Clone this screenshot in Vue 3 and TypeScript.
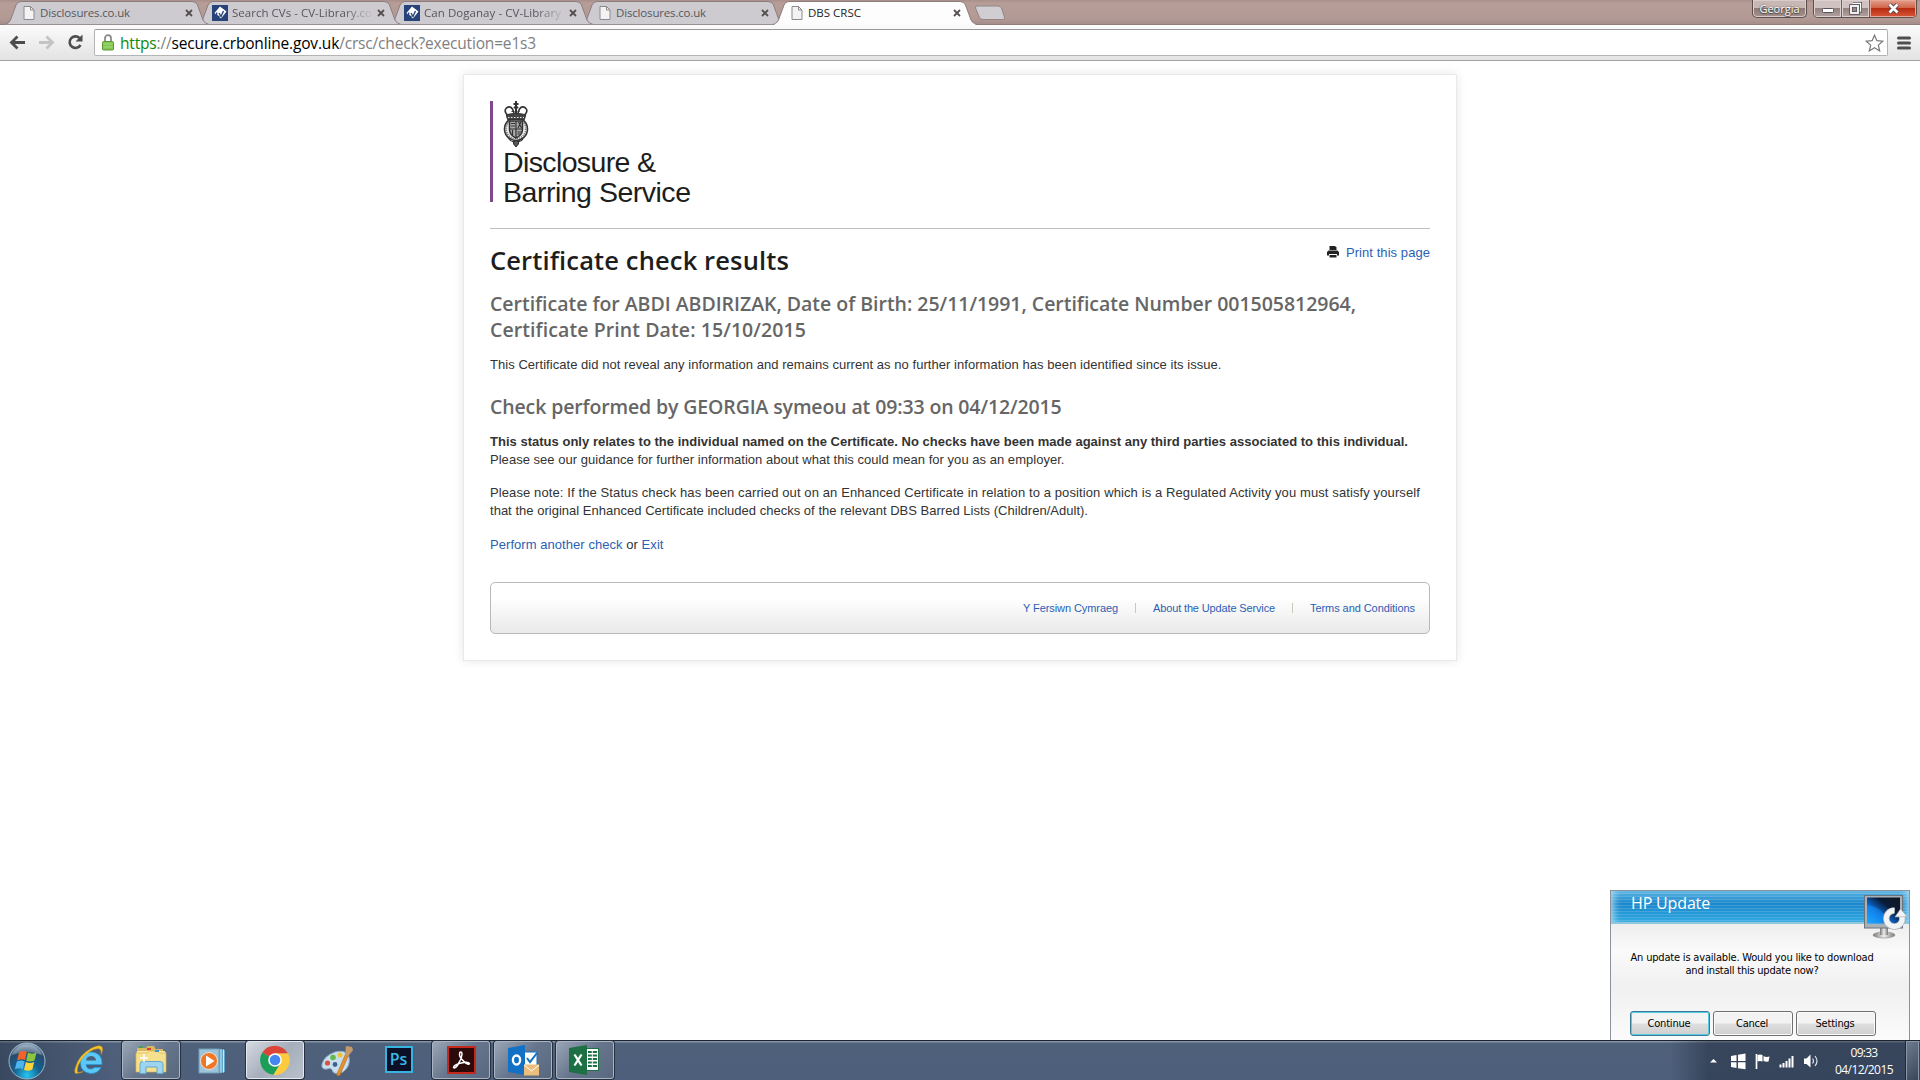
<script setup lang="ts">
interface Tab {
  title: string
  icon: 'page' | 'cv'
  width: number
  active?: boolean
}

const tabs: Tab[] = [
  { title: 'Disclosures.co.uk', icon: 'page', width: 90 },
  { title: 'Search CVs - CV-Library.co', icon: 'cv', width: 140 },
  { title: 'Can Doganay - CV-Library', icon: 'cv', width: 137 },
  { title: 'Disclosures.co.uk', icon: 'page', width: 90 },
  { title: 'DBS CRSC', icon: 'page', width: 53, active: true },
]

// Tracks a line of text so that it spans the given number of pixels.
const vTrack = {
  mounted(el: HTMLElement, binding: { value: number }) {
    const count = (el.textContent ?? '').length
    const natural = el.getBoundingClientRect().width
    el.style.letterSpacing = `${(binding.value - natural) / count}px`
  },
}
</script>

<template>
  <div class="screen">
    <header class="chrome">
      <div class="strip">
        <div class="tabs">
          <div
            v-for="(tab, i) in tabs"
            :key="i"
            class="tab"
            :class="{ active: tab.active }"
            :style="{ zIndex: tab.active ? 9 : 5 - i }"
          >
            <svg class="shape" width="204" height="25" viewBox="0 0 204 25">
              <path
                d="M0 24.5 Q4 23.5 5.5 20 L11 5 Q12.5 1.5 16 1.5 L187 1.5 Q191 1.5 192.5 5 L198 20 Q199.500 23.500 204 24.500"
                :fill="tab.active ? '#fdfdfd' : '#cdcbd0'"
                stroke="#8b7e7e"
              />
              <path v-if="!tab.active" d="M0 24.500H204" stroke="#98908f" />
              <path v-else d="M2 24.500H202" stroke="#fbfbfb" stroke-width="1.500" />
            </svg>
            <svg v-if="tab.icon === 'page'" class="fav" width="12" height="14" viewBox="0 0 12 14">
              <path d="M1 .5H7.500L11 4V13.500H1Z" fill="#f4f3f3" stroke="#8b8b8b" />
              <path d="M7.500 .5V4H11" fill="none" stroke="#8b8b8b" />
            </svg>
            <svg v-else class="fav cv" width="16" height="16" viewBox="0 0 16 16">
              <rect width="16" height="16" fill="#27447a" />
              <path d="M8 1.500L14.500 6.500L9 13.500L2.500 8Z" fill="#fff" />
              <path d="M5 7.500C3.500 10 5.500 12.500 7.500 11M7 8L9 11.500L11.500 6" fill="none" stroke="#27447a" stroke-width="1.400" />
            </svg>
            <span class="tab-title" :class="{ fade: tab.icon === 'cv' }">
              <span v-track="tab.width" class="fit">{{ tab.title }}</span>
            </span>
            <svg class="close" width="8" height="8" viewBox="0 0 8 8">
              <path d="M1 1L7 7M7 1L1 7" stroke="#55504f" stroke-width="1.800" />
            </svg>
          </div>
          <svg class="new-tab" width="32" height="16" viewBox="0 0 32 16">
            <path d="M3 1H24Q26.500 1 27.500 3L30.500 12Q31 14.500 29 14.500H9Q6.500 14.500 5.500 12.500L1.500 3Q1 1 3 1Z" fill="#d0ced2" stroke="#958685" />
          </svg>
        </div>
        <div class="caption">
          <div class="user">Georgia</div>
          <div class="controls">
            <div class="ctl min">
              <svg width="12" height="6" viewBox="0 0 12 6"><rect x=".5" y=".5" width="11" height="4" rx="1" fill="#fff" stroke="#55535c" /></svg>
            </div>
            <div class="ctl max">
              <svg width="13" height="13" viewBox="0 0 13 13">
                <path d="M4 1.500H11.500V9H9" fill="none" stroke="#55535c" stroke-width="3" />
                <path d="M4 1.500H11.500V9H9" fill="none" stroke="#fff" stroke-width="1.300" />
                <rect x="2" y="4" width="7" height="7" fill="none" stroke="#55535c" stroke-width="3.600" />
                <rect x="2" y="4" width="7" height="7" fill="none" stroke="#fff" stroke-width="1.800" />
              </svg>
            </div>
            <div class="ctl shut">
              <svg width="13" height="11" viewBox="0 0 13 11">
                <path d="M2.500 1.500L10.500 9.500M10.500 1.500L2.500 9.500" stroke="#5a4448" stroke-width="4.400" />
                <path d="M2.500 1.500L10.500 9.500M10.500 1.500L2.500 9.500" stroke="#fff" stroke-width="2.600" />
              </svg>
            </div>
          </div>
        </div>
      </div>
      <div class="toolbar">
        <svg class="nav" width="94" height="35" viewBox="0 0 94 35">
          <path d="M25 17.500H12M17.500 11.500L11.500 17.500L17.500 23.500" fill="none" stroke="#4d4d4d" stroke-width="2.800" />
          <path d="M39 17.500H52M46.500 11.500L52.500 17.500L46.500 23.500" fill="none" stroke="#c4c4c4" stroke-width="2.800" />
          <path d="M80.500 20A5.800 5.800 0 1 1 79.500 13" fill="none" stroke="#4d4d4d" stroke-width="2.600" />
          <path d="M82.500 9.500V16.500H75.500Z" fill="#4d4d4d" />
        </svg>
        <div class="omnibox">
          <svg width="12" height="17" viewBox="0 0 12 17">
            <path d="M3 8V4.500A3 3.300 0 0 1 9 4.500V8" fill="none" stroke="#8a8a8a" stroke-width="1.800" />
            <rect x=".5" y="7.500" width="11" height="8.500" rx="1" fill="#82c653" stroke="#5a9a36" />
            <path d="M1.500 10H10.500M1.500 13H10.500" stroke="#a3dc78" />
          </svg>
          <span v-track="416" class="url"><span class="scheme">https</span>://<span class="host">secure.crbonline.gov.uk</span>/crsc/check?execution=e1s3</span>
          <svg class="star" width="19" height="18" viewBox="0 0 19 18">
            <path d="M9.500 1.200L11.900 6.700L17.800 7.200L13.300 11.100L14.700 16.900L9.500 13.800L4.300 16.900L5.700 11.100L1.200 7.200L7.100 6.700Z" fill="#fff" stroke="#777" stroke-width="1.200" />
          </svg>
        </div>
        <svg class="menu" width="14" height="14" viewBox="0 0 14 14">
          <path d="M1.500 2H12.500M1.500 7H12.500M1.500 12H12.500" stroke="#4f4f4f" stroke-width="3" stroke-linecap="round" />
        </svg>
      </div>
    </header>

    <main class="page">
      <article class="card">
        <div class="logo">
          <div class="bar"></div>
          <div class="brand">
            <svg width="26" height="46" viewBox="0 0 26 46" fill="none" stroke="#333">
              <circle cx="13" cy="28" r="11.500" stroke-width="1.600" fill="#eee" />
              <circle cx="13" cy="28" r="9.800" stroke="#777" stroke-width="1.600" stroke-dasharray="1.200 1" />
              <path d="M6.500 20H19.500V29Q19 34.500 13 37Q7 34.500 6.500 29Z" fill="#aaa" stroke-width="1.500" />
              <path d="M13 20V36M6.500 28H19.500M8 22.500H12M8 25H12M14.500 31H18.500M14.500 33H17M9.500 29V34M15.500 21L18.500 27M18 21L15 27" stroke-width="1.200" />
              <path d="M4.500 17L3.500 13Q.8 9.500 3.500 7Q7 4.500 9.500 8L11 12M21.500 17L22.500 13Q25.200 9.500 22.500 7Q19 4.500 16.500 8L15 12" stroke-width="1.600" />
              <path d="M4 13.500Q13 11 22 13.500L21.500 18.500H4.500Z" fill="#444" />
              <path d="M5 16.500H21" stroke="#eee" stroke-dasharray="1.500 1.500" />
              <path d="M13 0V13M10.500 3H15.500M11 7Q13 5 15 7" stroke-width="2" />
              <path d="M8.500 10.500H17.500" stroke-dasharray="2 1" />
              <path d="M10.500 39.500H15.500V43L13 46L10.500 43Z" fill="#555" />
              <path d="M6 38Q9 42 12 40M20 38Q17 42 14 40" stroke-width="1.200" />
            </svg>
            <div class="line"><span v-track="152.500" class="fit">Disclosure &amp;</span></div>
            <div class="line"><span v-track="187.500" class="fit">Barring Service</span></div>
          </div>
        </div>

        <div class="head">
          <h1><span v-track="299" class="fit">Certificate check results</span></h1>
          <a class="print">
            <svg width="12" height="12" viewBox="0 0 12 12">
              <path d="M3 0H8L9.500 1.500V4H2.500V0Z" fill="#222" />
              <path d="M1.500 4.500H10.500L12 6V9.500H10V8H2V9.500H0V6Z" fill="#222" />
              <path d="M2.500 9H9.500V11.500H2.500Z" fill="#222" />
            </svg>
            <span v-track="84" class="fit">Print this page</span>
          </a>
        </div>

        <h2>
          <span v-track="866" class="fit">Certificate for ABDI ABDIRIZAK, Date of Birth: 25/11/1991, Certificate Number 001505812964,</span>
          <span v-track="316" class="fit">Certificate Print Date: 15/10/2015</span>
        </h2>
        <p class="result"><span v-track="731.500" class="fit">This Certificate did not reveal any information and remains current as no further information has been identified since its issue.</span></p>

        <h2 class="by"><span v-track="571.500" class="fit">Check performed by GEORGIA symeou at 09:33 on 04/12/2015</span></h2>
        <p class="status">
          <strong v-track="918" class="fit">This status only relates to the individual named on the Certificate. No checks have been made against any third parties associated to this individual.</strong>
          <span v-track="574.500" class="fit">Please see our guidance for further information about what this could mean for you as an employer.</span>
        </p>
        <p class="note">
          <span v-track="930" class="fit">Please note: If the Status check has been carried out on an Enhanced Certificate in relation to a position which is a Regulated Activity you must satisfy yourself</span>
          <span v-track="598" class="fit">that the original Enhanced Certificate included checks of the relevant DBS Barred Lists (Children/Adult).</span>
        </p>
        <p class="again"><span v-track="173.500" class="fit"><a>Perform another check</a> or <a>Exit</a></span></p>

        <footer class="foot">
          <a><span v-track="95" class="fit">Y Fersiwn Cymraeg</span></a>
          <i></i>
          <a><span v-track="122" class="fit">About the Update Service</span></a>
          <i></i>
          <a><span v-track="105" class="fit">Terms and Conditions</span></a>
        </footer>
      </article>
    </main>

    <aside class="update">
      <div class="update-head"><span v-track="79" class="fit">HP Update</span></div>
      <svg class="monitor" width="44" height="46" viewBox="0 0 44 46">
        <defs>
          <linearGradient id="scr" x1="0" y1="1" x2="1" y2="0">
            <stop offset="0" stop-color="#18b4ff" /><stop offset=".35" stop-color="#0a6fe0" /><stop offset=".65" stop-color="#0a1c38" /><stop offset="1" stop-color="#10151d" />
          </linearGradient>
          <linearGradient id="metal" x1="0" x2="1"><stop offset="0" stop-color="#777" /><stop offset=".5" stop-color="#eee" /><stop offset="1" stop-color="#777" /></linearGradient>
        </defs>
        <ellipse cx="20" cy="40" rx="11" ry="3" fill="url(#metal)" stroke="#888" stroke-width=".6" />
        <rect x="16" y="32" width="8" height="8" fill="url(#metal)" />
        <rect x=".5" y=".5" width="38" height="32.500" fill="#a9b1b8" stroke="#6b747c" />
        <rect x="3" y="2.500" width="33" height="26" fill="url(#scr)" />
        <path d="M3 10Q20 12 24 28.500H3Z" fill="#1f9dff" opacity=".4" />
        <path d="M30.500 15.500A8 8 0 1 0 37.500 20" fill="none" stroke="#aeb3b8" stroke-width="6.400" />
        <path d="M30.500 15.500A8 8 0 1 0 37.500 20" fill="none" stroke="#f2f3f4" stroke-width="5" />
        <path d="M31 22L36.500 14L43 21.500Z" fill="#f2f3f4" stroke="#aeb3b8" stroke-width=".7" />
      </svg>
      <div class="message">
        <span v-track="243" class="fit">An update is available. Would you like to download</span>
        <span v-track="133" class="fit">and install this update now?</span>
      </div>
      <div class="buttons">
        <button class="primary"><span v-track="43" class="fit">Continue</span></button>
        <button><span v-track="32" class="fit">Cancel</span></button>
        <button><span v-track="39" class="fit">Settings</span></button>
      </div>
    </aside>

    <footer class="taskbar">
      <div class="slot orb">
        <svg width="38" height="38" viewBox="0 0 38 38">
          <defs>
            <radialGradient id="orb" cx=".5" cy=".9" r=".9"><stop offset="0" stop-color="#26c6f2" /><stop offset=".4" stop-color="#13618f" /><stop offset=".75" stop-color="#284b6c" /><stop offset="1" stop-color="#8fa9bd" /></radialGradient>
          </defs>
          <circle cx="19" cy="19" r="18" fill="url(#orb)" stroke="#9fb6c8" />
          <path d="M4 13Q8 3 19 2.500Q30 3 34 13Q19 7 4 13Z" fill="#fff" opacity=".28" />
          <path d="M11 10.500Q14.500 8 18.800 10L17 18Q13 16.500 9 18.500Z" fill="#f0642a" />
          <path d="M20 10.500Q24 12.800 28.500 10.500L26.500 18.500Q22 20.500 18.200 18.500Z" fill="#8cc63e" />
          <path d="M8.700 19.800Q12.500 17.500 16.700 19.500L14.800 27Q11 25.500 6.800 27.500Z" fill="#4fb4ee" />
          <path d="M17.900 20Q22 22 26.200 20L24.300 27.500Q20 30 16 27.800Z" fill="#fdd23a" />
        </svg>
      </div>
      <div class="slot ie">
        <svg width="30" height="34" viewBox="0 0 30 34">
          <path d="M27 23.500Q24 29.500 16.500 29.500Q6.500 28.500 6.500 18.500Q7 8.500 16.500 8Q28.500 8.500 28 20.500H12Q12.500 25 16.500 25Q19.500 25 20.500 23.500Z" fill="#5cc8f5" stroke="#2a9bdc" stroke-width=".8" />
          <path d="M12 16.500H22Q21.500 12 17 12Q12.500 12.300 12 16.500Z" fill="#4b6078" />
          <path d="M5 28.500Q-1 32 1.500 23.500Q5 11 17 4.500Q29 -1.500 28.500 6Q28.300 8 27 10.500Q28 5.500 24.500 4.500Q16 5 8.500 14Q2 23 3.500 28Q4.500 30 9 27.500Z" fill="#f8c423" stroke="#d99b14" stroke-width=".5" />
        </svg>
      </div>
      <div class="slot task">
        <svg width="32" height="30" viewBox="0 0 32 30">
          <path d="M2 3H11L12.500 1H19L20.500 4H28V7H31V27H1V7H2Z" fill="#d9b75f" />
          <path d="M2 6H30V26H2Z" fill="#f9e9a6" />
          <path d="M1 8H12L14 6H23L24.500 8H31V27H1Z" fill="#f7e08d" stroke="#d7b553" stroke-width=".7" />
          <rect x="4" y="1" width="3.500" height="2" fill="#3aa845" /><rect x="12" y="3" width="4" height="2" fill="#d24434" /><rect x="20" y="5" width="4" height="2" fill="#3b90d8" />
          <path d="M5 28.500V19Q5 16.500 8 16.500H25Q28 16.500 28 19V28.500H22V22H11V28.500Z" fill="#9ed4ee" stroke="#5eaad0" />
          <path d="M9 9V17M5 13H13" stroke="#fff" stroke-width="1.500" />
        </svg>
      </div>
      <div class="slot wmp">
        <svg width="28" height="26" viewBox="0 0 28 26">
          <path d="M21 1L27 2V24L21 25Z" fill="#5fa5c9" /><path d="M23 1V25M25.500 1.500V24.500" stroke="#cce8f5" />
          <rect x="1" y="1" width="20" height="24" fill="#9cc5db" stroke="#6e9fb9" />
          <circle cx="11" cy="13" r="8.500" fill="#ef7723" stroke="#e9e2da" stroke-width="1" />
          <path d="M8 7.500L16.500 13L8 18.500Z" fill="#fff" />
        </svg>
      </div>
      <div class="slot task current">
        <svg width="30" height="30" viewBox="0 0 30 30">
          <path d="M15 15L2.200 7.500A15 15 0 0 1 28 8.500H15Z" fill="#dc4437" />
          <path d="M15 15L2.200 7.500A14.800 14.800 0 0 0 13.500 29.800L20.500 18.500Z" fill="#1b9e58" />
          <path d="M15 8.500H28.200A14.800 14.800 0 0 1 13.500 29.800L20.800 18Z" fill="#fecb3e" />
          <circle cx="15" cy="15" r="6.800" fill="#fff" /><circle cx="15" cy="15" r="5.300" fill="#4587f2" />
        </svg>
      </div>
      <div class="slot paint">
        <svg width="32" height="32" viewBox="0 0 32 32">
          <path d="M14 7Q25 4 28 12Q30 21 22 27Q15 30 12 27Q11 22 6 24Q0 25 1 19Q3 11 14 7Z" fill="#c8dfee" stroke="#89abc3" />
          <circle cx="12" cy="12.500" r="2.800" fill="#66b84c" /><circle cx="6.500" cy="18" r="2.600" fill="#d7553e" /><circle cx="19" cy="10" r="2.500" fill="#efc52f" /><circle cx="14" cy="19.500" r="2.400" fill="#39658c" />
          <path d="M25 8L28 9L18.500 31L15.500 30Z" fill="#e4902f" stroke="#b9661a" stroke-width=".6" />
          <path d="M25 1L31 2L32 5L27.500 11L24 10Z" fill="#c49a6c" />
        </svg>
      </div>
      <div class="slot ps"><span>Ps</span></div>
      <div class="slot task">
        <svg width="29" height="28" viewBox="0 0 29 28">
          <rect x="1" y="1" width="27" height="26" fill="#2c0a0a" stroke="#c5281d" stroke-width="2" />
          <path d="M6.500 21.500C7 18 21 14.500 22.500 17.500C22 20.500 12.500 13 12.500 8.500C12.500 5 15 5 15 8.500C14.500 14 8.500 24 6.500 21.500Z" fill="none" stroke="#fff" stroke-width="1.500" />
        </svg>
      </div>
      <div class="slot task office">
        <svg width="32" height="32" viewBox="0 0 32 32">
          <rect x="17" y="8" width="13" height="14" fill="#fff" stroke="#1271c4" />
          <path d="M20 14L23 18L30 9" fill="none" stroke="#1271c4" stroke-width="2" />
          <path d="M1 4L18 1V31L1 28Z" fill="#1271c4" />
          <ellipse cx="9.500" cy="16" rx="3.600" ry="4.500" fill="none" stroke="#fff" stroke-width="2.300" />
          <rect x="17" y="20.500" width="15" height="11" fill="#ecbd7b" /><path d="M17 21L24.500 27L32 21" fill="none" stroke="#fff" />
        </svg>
      </div>
      <div class="slot task office">
        <svg width="32" height="32" viewBox="0 0 32 32">
          <rect x="17" y="4.500" width="12.500" height="22" fill="#fff" stroke="#1c7044" />
          <path d="M19 8H28M19 11.500H28M19 15H28M19 18.500H28M19 22H28" stroke="#1c7044" stroke-width="2" /><path d="M23.300 6V24" stroke="#fff" />
          <path d="M0 4L18 1V31L0 28Z" fill="#1c7044" />
          <path d="M5.500 10.500L12.500 21.500M12.500 10.500L5.500 21.500" stroke="#fff" stroke-width="2.300" />
        </svg>
      </div>
      <div class="tray">
        <svg width="112" height="24" viewBox="0 0 112 24">
          <path d="M3 13.500L6.500 10L10 13.500Z" fill="#fff" />
          <path d="M24 7L29.500 6V12H24ZM31 5.800L38.500 4.500V12H31ZM24 13.300H29.500V19L24 18ZM31 13.300H38.500V20.300L31 19.200Z" fill="#fff" />
          <path d="M49.500 5V20" stroke="#fff" stroke-width="1.700" />
          <path d="M50.500 6Q53 4.800 55.500 6V12.500Q53 11.500 50.500 12.500ZM56.500 7Q59 8.500 62.500 7.500L61.500 12.500Q59 13 56.500 12Z" fill="#fff" />
          <path d="M73.500 15.500V18.500M76.500 14V18.500M79.500 12V18.500M82.500 9.500V18.500M85.500 7V18.500" stroke="#fff" stroke-width="2" />
          <path d="M97 9.500H99.500L103.500 5.500V18.500L99.500 15H97Z" fill="#fff" />
          <path d="M105.500 9.500Q107.500 12 105.500 14.500M108 7Q112 12 108 17" fill="none" stroke="#dfe5ec" stroke-width="1.200" />
        </svg>
        <div class="clock">
          <span v-track="27" class="fit">09:33</span>
          <span v-track="58" class="fit">04/12/2015</span>
        </div>
        <div class="peek"></div>
      </div>
    </footer>
  </div>
</template>

<style>
body {
  margin: 0;
  overflow: hidden;
  background: #fff;
}
</style>

<style scoped>
.screen {
  position: relative;
  display: flex;
  flex-direction: column;
  width: 1920px;
  height: 1080px;
  overflow: hidden;
  background: #fff;
  font-family: 'Liberation Sans', Arial, sans-serif;
}
svg { display: block; flex: none; }
.fit { display: inline-block; white-space: nowrap; }

/* browser frame */
.strip {
  display: flex;
  justify-content: space-between;
  height: 25px;
  background: linear-gradient(#a88f8a 0, #b69d97 3px, #b39a95 18px, #a38d89);
  box-shadow: inset 0 -1px #8f7d7a;
}
.tabs {
  display: flex;
  padding-left: 5px;
}
.tab {
  position: relative;
  display: flex;
  align-items: center;
  width: 204px;
  height: 25px;
  margin-right: -12px;
  box-sizing: border-box;
  padding: 1px 0 0 18px;
  color: #57565c;
  font: 11.500px/24px 'Open Sans', 'Noto Sans', sans-serif;
}
.tab.active { color: #1d1d1d; margin-right: -2px; }
.shape { position: absolute; inset: 0; }
.fav { position: relative; }
.fav.cv { margin-left: -3px; }
.tab-title {
  position: relative;
  width: 140px;
  margin-left: 5px;
  white-space: nowrap;
}
.tab-title.fade {
  width: 141px;
  margin-left: 4px;
  mask-image: linear-gradient(90deg, #000 112px, transparent 142px);
}
.close { position: relative; margin-left: 5px; }
.tab-title.fade + .close { margin-left: 4px; }
.new-tab { margin-top: 5px; margin-left: -1px; }
.caption { display: flex; padding-right: 3px; }
.user {
  width: 53px;
  height: 17px;
  margin-right: 6px;
  border: 1px solid #5e4e4c;
  border-top: 0;
  border-radius: 0 0 5px 5px;
  background: linear-gradient(#c8b8b5 45%, #8d7975 50%, #a5928e);
  box-shadow: inset 0 0 0 1px #d9ccca;
  color: #fff;
  font: 11px/17px 'Open Sans', 'Noto Sans', sans-serif;
  text-align: center;
  text-shadow: 0 0 2px #444, 0 1px 1px #444;
}
.controls {
  display: flex;
  height: 17px;
  overflow: hidden;
  border: 1px solid #5e4e4c;
  border-top: 0;
  border-radius: 0 0 5px 5px;
  background: linear-gradient(#cfc2c0 45%, #94827f 50%, #b3a3a0);
}
.ctl {
  display: flex;
  align-items: center;
  justify-content: center;
  width: 27px;
  box-shadow: inset 0 0 0 1px #ddd1cf;
  border-right: 1px solid #6f5f5d;
}
.min svg { margin-top: 4px; }
.shut {
  width: 46px;
  border: 0;
  background: linear-gradient(#e3a08d 0, #d2664a 45%, #b82c12 50%, #d9573a);
  box-shadow: inset 0 0 0 1px #e8a898;
}
.toolbar {
  display: flex;
  align-items: center;
  height: 36px;
  box-sizing: border-box;
  border-bottom: 1px solid #a3a3a3;
  background: linear-gradient(#fbfbfb, #e3e3e3);
}
.omnibox {
  display: flex;
  align-items: center;
  width: 1794px;
  height: 27px;
  box-sizing: border-box;
  padding: 0 3px 0 7px;
  border: 1px solid #b4b4b4;
  border-top-color: #999;
  border-radius: 2px;
  background: #fff;
}
.url {
  margin-left: 6px;
  color: #808080;
  font: 15.500px/24px 'Open Sans', 'Noto Sans', sans-serif;
  white-space: nowrap;
}
.scheme { color: #0b8a0b; }
.host { color: #000; }
.star { margin-left: auto; }
.menu { margin-left: 9px; }

/* certificate page */
.page {
  display: flex;
  flex: 1;
  align-items: flex-start;
  justify-content: center;
  padding-top: 13px;
}
.card {
  width: 940px;
  height: 559px;
  padding: 26px 26px 0 26px;
  border: 1px solid #e9e9e9;
  box-shadow: 0 0 10px rgba(0, 0, 0, .1);
  color: #333;
  font-size: 13px;
  line-height: 18px;
}
.logo {
  display: flex;
  height: 128px;
  box-sizing: border-box;
  border-bottom: 1px solid #bfbfbf;
}
.bar {
  width: 3px;
  height: 101px;
  margin-right: 10px;
  background: #7f4a8c;
}
.line {
  height: 30px;
  color: #1d1d1b;
  font-size: 28.500px;
  line-height: 31px;
}
.head {
  display: flex;
  justify-content: space-between;
  padding-top: 14px;
}
h1, h2 {
  margin: 0;
  font-family: 'Open Sans', 'Noto Sans', sans-serif;
  font-weight: 600;
}
h1 {
  color: #1d1d1d;
  font-size: 25.500px;
  line-height: 34px;
}
.print {
  display: flex;
  gap: 7px;
  padding-top: 1px;
}
.print svg { margin-top: 2px; }
a { color: #2b5fb4; }
h2 {
  display: flex;
  flex-direction: column;
  align-items: flex-start;
  margin-top: 14px;
  color: #666;
  font-size: 19.500px;
  line-height: 26px;
}
p { margin: 13px 0 0; }
.status, .note {
  display: flex;
  flex-direction: column;
  align-items: flex-start;
}
h2.by { margin-top: 20px; }
.status { margin-top: 13px; }
.note { margin-top: 15px; }
.again { margin-top: 16px; }
.foot {
  display: flex;
  justify-content: flex-end;
  height: 52px;
  margin-top: 28px;
  box-sizing: border-box;
  padding: 15px 14px 0 0;
  border: 1px solid #b9b9b9;
  border-radius: 5px;
  background: linear-gradient(#fff 30%, #e9e9e9);
  font-size: 11px;
  line-height: 20px;
}
.foot i {
  width: 1px;
  height: 10px;
  margin: 5px 17px 0;
  background: #c6cbb8;
}

/* HP update popup, above the page and the taskbar edge */
.update {
  position: absolute;
  right: 10px;
  bottom: 40px;
  display: flex;
  flex-direction: column;
  width: 300px;
  height: 150px;
  box-sizing: border-box;
  border: 1px solid #8b9299;
  border-bottom: 0;
  background: linear-gradient(#ececec 30px, #fafafa 60px, #f0f0f0 95px, #fbfbfb);
  color: #000;
  font: 11px/13px 'DejaVu Sans Condensed', 'Noto Sans', sans-serif;
}
.update-head {
  height: 31px;
  padding-left: 20px;
  background:
    repeating-linear-gradient(transparent 0 2px, rgba(255, 255, 255, .14) 2px 3px),
    linear-gradient(#5bb4e2, #1b87cb 40%, #2ea8e0);
  box-shadow: inset 8px 0 8px -6px #b8e1f5, inset -8px 0 8px -6px #b8e1f5, 0 2px #8fc8de;
  color: #fff;
  font: 16px/24px 'Open Sans', 'Noto Sans', sans-serif;
}
.monitor { position: absolute; top: 4px; right: 1px; }
.message {
  display: flex;
  flex-direction: column;
  align-items: center;
  margin-top: 29px;
  padding-right: 16px;
}
.buttons {
  display: flex;
  gap: 3px;
  margin: 34px 0 0 19px;
}
button {
  width: 80px;
  height: 25px;
  padding: 0 2px 0 0;
  border: 1px solid #707070;
  border-radius: 3px;
  background: linear-gradient(#f3f3f3 48%, #dedede 52%, #cfcfcf);
  box-shadow: inset 0 0 0 1px #fafafa;
  color: #000;
  font: inherit;
}
button.primary {
  border-color: #3b7a94;
  box-shadow: inset 0 0 0 1px #56cbe6;
}

/* taskbar */
.taskbar {
  display: flex;
  flex: none;
  height: 40px;
  box-sizing: border-box;
  border-top: 1px solid #1c2430;
  background: linear-gradient(90deg, rgba(20, 30, 45, .35), rgba(20, 30, 45, 0) 6% 87%, rgba(20, 30, 45, .4) 89%), linear-gradient(#8593a6 0 1px, #4f607a 2px, #4d5f7b);
}
.slot {
  display: flex;
  align-items: center;
  justify-content: center;
  width: 62px;
}
.orb { width: 54px; }
.ie { width: 68px; }
.ie svg { margin-left: 2px; }
.task {
  width: 58px;
  height: 38px;
  margin-right: 4px;
  box-sizing: border-box;
  border: 1px solid #aab4c2;
  border-radius: 3px;
  background: linear-gradient(135deg, #9aa6b6, #66758c 50%, #58697f);
  box-shadow: 0 0 0 1px #27303e;
}
.wmp svg { margin-right: 6px; }
.current {
  border-color: #e6eaf0;
  background: linear-gradient(135deg, #d5dae1, #a5aebb 50%, #b8c0ca);
}
.paint { width: 60px; }
.paint svg { margin-right: 3px; }
.ps { width: 64px; }
.ps span {
  width: 24px;
  height: 23px;
  margin: 0 0 3px -3px;
  border: 2px solid #36b3de;
  background: #0b1026;
  color: #3ab9e6;
  font: 600 16px/23px 'Open Sans', 'Noto Sans', sans-serif;
  text-align: center;
}
.tray {
  display: flex;
  align-items: center;
  margin-left: auto;
  color: #fff;
  font: 12px/17px 'Open Sans', 'Noto Sans', sans-serif;
}
.clock {
  display: flex;
  flex-direction: column;
  align-items: center;
  width: 58px;
  margin: 0 13px 0 16px;
}
.peek {
  width: 11px;
  height: 38px;
  margin-right: 1px;
  border: 1px solid #8b97a8;
  background: linear-gradient(135deg, #6c7a8f, #39465a);
  box-shadow: -1px 0 #202937;
}
</style>
